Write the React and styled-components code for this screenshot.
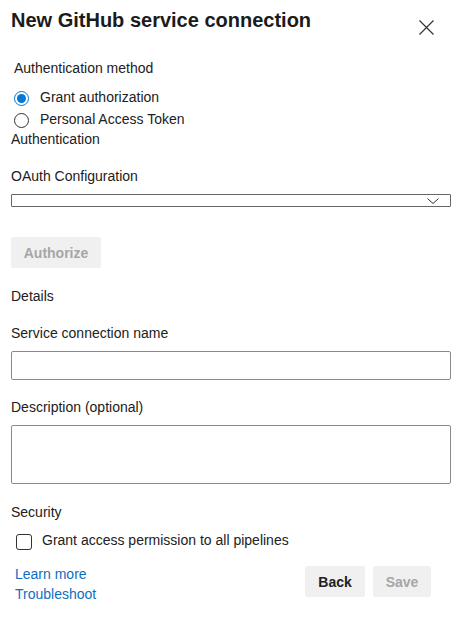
import React, { useState } from 'react';
import styled, { createGlobalStyle } from 'styled-components';

const GlobalStyle = createGlobalStyle`
    body {
        margin: 0;
        background: #ffffff;
        font-family: "Liberation Sans", Arial, sans-serif;
        color: #212121;
    }
`;

const Panel = styled.div`
    width: 465px;
    padding: 8px 14px 0 11px;
    box-sizing: border-box;
`;

const Header = styled.div`
    display: flex;
    justify-content: space-between;
    align-items: flex-start;
    height: 24px;
`;

const Title = styled.h1`
    margin: 0;
    font-size: 20px;
    line-height: 24px;
    font-weight: 700;
    color: #1b1b1b;
`;

const CloseButton = styled.button`
    border: none;
    background: none;
    padding: 0;
    margin: 12px 17px 0 0;
    width: 15px;
    height: 15px;
    display: flex;
    cursor: pointer;
`;

const Label = styled.div`
    font-size: 14px;
    line-height: 20px;
    margin-top: ${({ $top }) => $top || 17}px;
    padding-left: ${({ $indent }) => $indent || 0}px;
`;

const RadioGroup = styled.div`
    display: flex;
    flex-direction: column;
    margin-top: 8px;
    padding-left: 3px;
`;

const RadioRow = styled.label`
    display: flex;
    align-items: center;
    gap: 11px;
    height: 22px;
    font-size: 14px;
    cursor: pointer;
`;

const RadioCircle = styled.span`
    width: 15px;
    height: 15px;
    box-sizing: border-box;
    border-radius: 50%;
    border: 1px solid ${({ $checked }) => ($checked ? '#0078d4' : '#333333')};
    display: flex;
    align-items: center;
    justify-content: center;
    margin-top: 2px;

    &::after {
        content: '';
        width: 9px;
        height: 9px;
        border-radius: 50%;
        background: ${({ $checked }) => ($checked ? '#0078d4' : 'transparent')};
    }
`;

const Select = styled.div`
    margin-top: 8px;
    height: 13px;
    box-sizing: border-box;
    border: 1px solid #666666;
    border-radius: 1px;
    display: flex;
    align-items: center;
    justify-content: flex-end;
    padding-right: 11px;
`;

const Button = styled.button`
    height: 31px;
    width: ${({ $width }) => $width}px;
    border: none;
    border-radius: 2px;
    background: #f0f0f0;
    font-family: inherit;
    font-size: 14px;
    font-weight: 700;
    color: ${({ disabled }) => (disabled ? '#a6a6a6' : '#212121')};
    padding: 0;
    cursor: ${({ disabled }) => (disabled ? 'default' : 'pointer')};
`;

const AuthorizeButton = styled(Button)`
    display: block;
    margin-top: 30px;
`;

const TextInput = styled.input`
    display: block;
    width: 100%;
    height: 29px;
    margin-top: 8px;
    box-sizing: border-box;
    border: 1px solid #8a8a8a;
    border-radius: 2px;
    font-family: inherit;
    font-size: 14px;
    padding: 0 8px;
`;

const TextArea = styled.textarea`
    display: block;
    width: 100%;
    height: 59px;
    margin-top: 8px;
    box-sizing: border-box;
    border: 1px solid #8a8a8a;
    border-radius: 2px;
    font-family: inherit;
    font-size: 14px;
    padding: 6px 8px;
    resize: none;
`;

const CheckRow = styled.label`
    display: flex;
    align-items: center;
    gap: 10px;
    height: 20px;
    margin-top: 8px;
    padding-left: 5px;
    font-size: 14px;
    cursor: pointer;
`;

const CheckBox = styled.span`
    width: 16px;
    height: 16px;
    box-sizing: border-box;
    border: 1px solid #333333;
    border-radius: 3px;
    margin-top: 3px;
`;

const Footer = styled.div`
    display: flex;
    justify-content: space-between;
    align-items: flex-start;
    margin-top: 14px;
    padding-left: 4px;
    padding-right: 20px;
`;

const Links = styled.div`
    display: flex;
    flex-direction: column;
`;

const Link = styled.a`
    font-size: 14px;
    line-height: 20px;
    color: #106ebe;
    text-decoration: none;
    cursor: pointer;
`;

const Actions = styled.div`
    display: flex;
    gap: 8px;
    margin-top: 2px;
`;

export default function App() {
    const [method, setMethod] = useState('grant');

    return (
        <>
            <GlobalStyle />
            <Panel>
                <Header>
                    <Title>New GitHub service connection</Title>
                    <CloseButton aria-label="Close">
                        <svg width="15" height="15" viewBox="0 0 15 15">
                            <path d="M0.5 0.5 L14.5 14.5 M14.5 0.5 L0.5 14.5" stroke="#333" strokeWidth="1.2" fill="none" />
                        </svg>
                    </CloseButton>
                </Header>

                <Label $top={26} $indent={3}>Authentication method</Label>
                <RadioGroup>
                    <RadioRow onClick={() => setMethod('grant')}>
                        <RadioCircle $checked={method === 'grant'} />
                        Grant authorization
                    </RadioRow>
                    <RadioRow onClick={() => setMethod('pat')}>
                        <RadioCircle $checked={method === 'pat'} />
                        Personal Access Token
                    </RadioRow>
                </RadioGroup>
                <Label $top={-1}>Authentication</Label>

                <Label>OAuth Configuration</Label>
                <Select>
                    <svg width="12" height="6" viewBox="0 0 12 6">
                        <path d="M0.5 0.5 L6 5.5 L11.5 0.5" stroke="#333" strokeWidth="1" fill="none" />
                    </svg>
                </Select>

                <AuthorizeButton $width={90} disabled>Authorize</AuthorizeButton>

                <Label $top={18}>Details</Label>
                <Label>Service connection name</Label>
                <TextInput />
                <Label>Description (optional)</Label>
                <TextArea />

                <Label $top={18}>Security</Label>
                <CheckRow>
                    <CheckBox />
                    Grant access permission to all pipelines
                </CheckRow>

                <Footer>
                    <Links>
                        <Link>Learn more</Link>
                        <Link>Troubleshoot</Link>
                    </Links>
                    <Actions>
                        <Button $width={60}>Back</Button>
                        <Button $width={58} disabled>Save</Button>
                    </Actions>
                </Footer>
            </Panel>
        </>
    );
}
